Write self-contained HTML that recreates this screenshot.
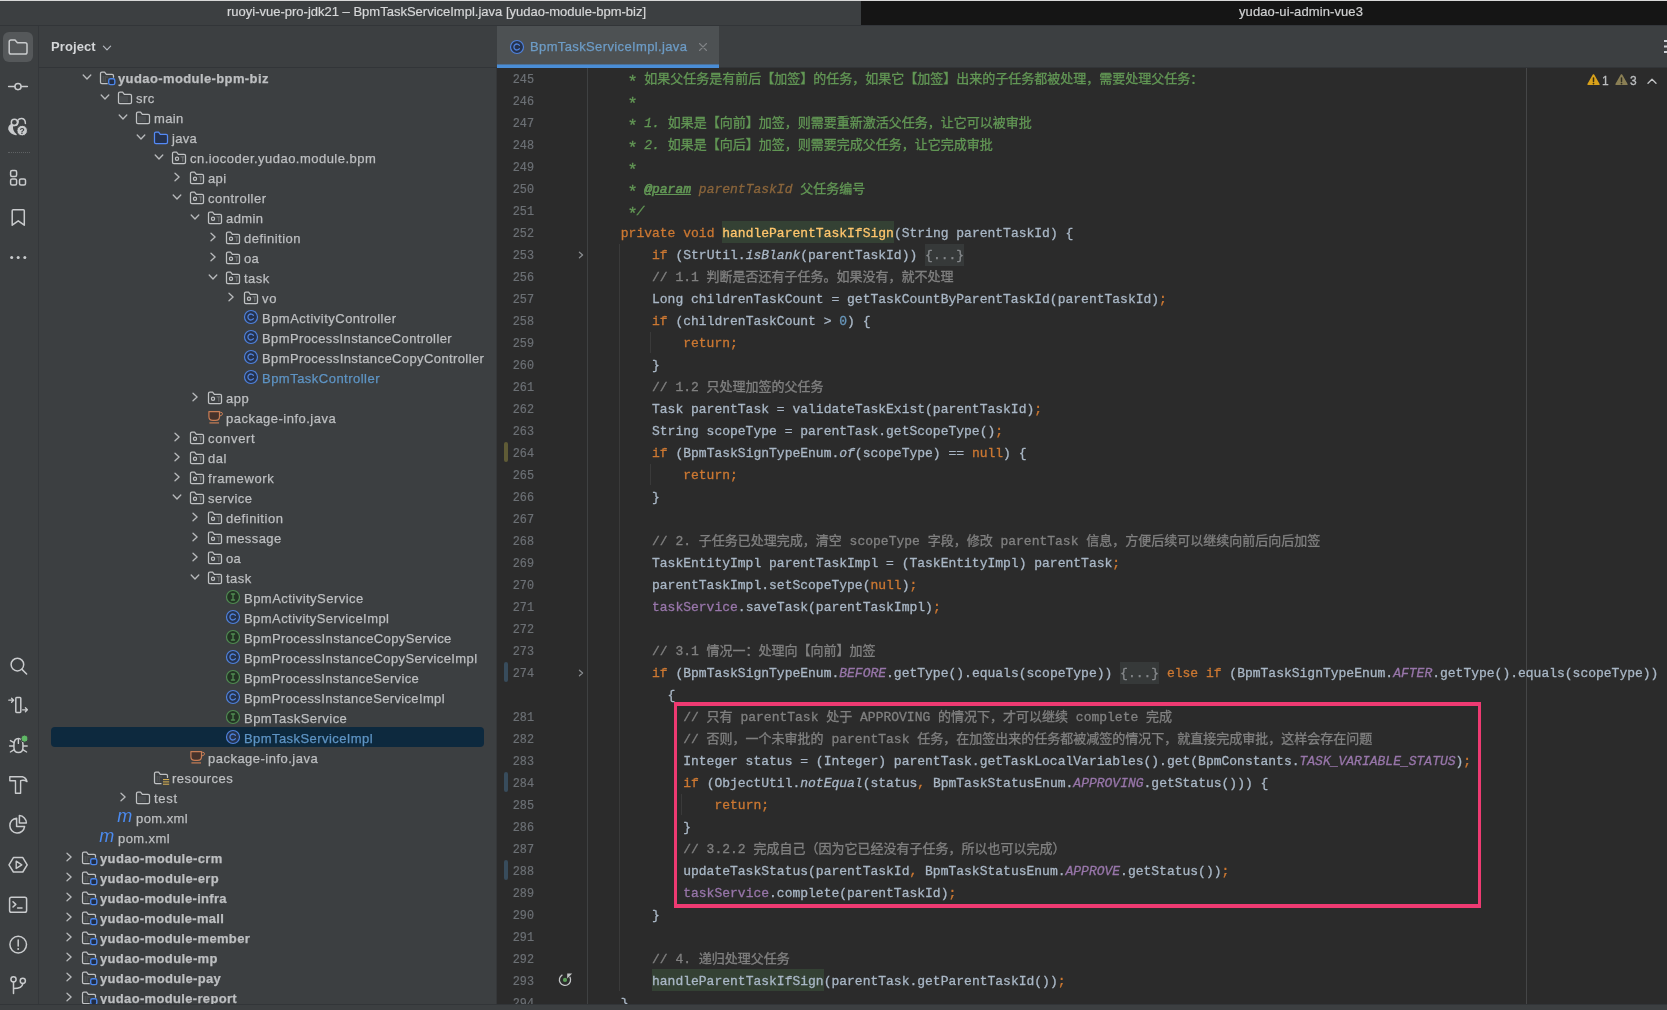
<!DOCTYPE html>
<html lang="zh-CN"><head><meta charset="utf-8"><title>BpmTaskServiceImpl.java</title>
<style>
*{box-sizing:border-box;margin:0;padding:0}
html,body{width:1667px;height:1010px;overflow:hidden;background:#3c3f41}
body{position:relative;font-family:"Liberation Sans","Noto Sans CJK SC",sans-serif;font-size:13px;color:#bdbfc1}
svg{display:block;overflow:visible}
#title1{position:absolute;left:0;top:0;width:861px;height:26px;background:#3c3f41;border-top:1px solid #d8d8d8;border-bottom:1px solid #323538;color:#d6d7d8;line-height:22px;font-size:13px;letter-spacing:0}
#title1 span{will-change:transform;-webkit-text-stroke:.2px;position:absolute;left:227px;top:0;white-space:nowrap}
#title2{position:absolute;left:861px;top:0;width:806px;height:26px;border-bottom:1px solid #33363a;background:#151515;border-top:1px solid #d8d8d8;color:#cfd0d1;line-height:22px;font-size:13px;letter-spacing:.1px}
#title2 span{will-change:transform;-webkit-text-stroke:.2px;letter-spacing:.1px;position:absolute;left:378px;top:0;white-space:nowrap}
#strip{position:absolute;left:0;top:26px;width:39px;height:978px;background:#3c3f41;border-right:1px solid #34373a}
.sbtn{position:absolute;width:30px;height:30px;border-radius:6px;background:#55585a}
.sico{position:absolute}
#sepdots{position:absolute;left:8px;top:152px;width:22px;height:0;border-top:1px dotted #5f6264}
#proj{position:absolute;left:39px;top:26px;width:458px;height:978px;background:#3c3f41;overflow:hidden}
#phead{position:absolute;left:0;top:0;width:458px;height:42px;border-bottom:1px solid #323538}
#ptitle{will-change:transform;position:absolute;left:12px;top:13px;font-weight:700;font-size:13px;color:#d4d6d8;letter-spacing:.1px;line-height:16px}
#tree{will-change:transform;position:absolute;left:-39px;top:-26px;width:536px;height:1030px}
.row{position:absolute;left:0;height:20px;width:497px;white-space:nowrap}
.row .arr{position:absolute;top:2.6px}
.row .ico{position:absolute;top:1px}
.row .t{-webkit-text-stroke:.25px;position:absolute;top:.6px;line-height:20px;font-size:13px;letter-spacing:.22px}
.row .t.bold{font-weight:700;letter-spacing:.05px}
.row .t.blue{color:#5e94c4}
.selbg{position:absolute;left:51px;width:433px;height:20px;border-radius:4px;background:#0d293e}
#tabs{position:absolute;left:497px;top:26px;width:1170px;height:42px;background:#3c3f41;border-bottom:1px solid #323538}
#tab{position:absolute;left:0;top:0;width:222px;height:42px;background:#4d5153}
#tab i{position:absolute;left:0;top:38px;width:222px;height:4px;background:linear-gradient(to bottom,rgba(74,141,214,.55) 0,rgba(74,141,214,.55) 1px,#4a8dd6 1px)}
#tab .ico{position:absolute;left:12px;top:13px}
#tab .t{will-change:transform;-webkit-text-stroke:.25px;position:absolute;left:33px;top:12px;line-height:17px;color:#6d9cc6;letter-spacing:.37px}
#tab .x{position:absolute;left:201px;top:16px}
#editor{position:absolute;left:497px;top:68px;width:1170px;height:936px;background:#2b2b2b;overflow:hidden}
#ed{will-change:transform;position:absolute;left:-497px;top:-68px;width:1667px;height:1010px}
.ln{position:absolute;left:484.4px;width:50px;height:22px;line-height:25.6px;text-align:right;font-family:"Liberation Mono",monospace;font-size:12.4px;color:#6c7075;-webkit-text-stroke:.2px;transform:scaleX(.95);transform-origin:100% 50%}
.cl{-webkit-text-stroke:.3px;position:absolute;left:589.6px;height:22px;line-height:22px;white-space:pre;font-family:"Liberation Mono","Noto Sans CJK SC",monospace;font-size:13px;color:#a9b7c6}
.k{color:#cc7832} .c{color:#808080} .d{color:#629755} .f{color:#9876aa} .i{font-style:italic} .n{color:#6897bb}
.m{color:#ffc66d}
.hl{}
.hlb{position:absolute;height:22px;margin-top:-1px;background:#344134}
.fb{position:absolute;height:22px;width:39px;background:#363939}
.dt{color:#629755;font-style:italic;text-decoration:underline;-webkit-text-stroke:.6px}
.as{display:inline-block;width:7.8px;font-size:17px;line-height:1px;position:relative;top:4.2px;left:-1.2px}
.dp{color:#8a653b;font-style:italic}
.fold{color:#85888b}
.mk{position:absolute;left:504px;width:4px;height:20px;border-radius:2px}
.gd{position:absolute;width:1px}
#gsep{position:absolute;left:587px;top:68px;width:1px;height:942px;background:#3f4142}
#margin{position:absolute;left:1526px;top:68px;width:1px;height:942px;background:#454647}
#pink{position:absolute;left:674px;top:702px;width:807px;height:206px;border:solid #ee3a72;border-width:4px 3px}
#bottom{position:absolute;left:0;top:1004px;width:1667px;height:6px;background:#3c3f41;border-top:1px solid #323538}
#insp{position:absolute;left:1580px;top:70px;height:20px;font-size:12px;color:#bdbfc1}
#insp span{position:absolute;top:4.3px;line-height:14px;-webkit-text-stroke:.3px}
</style></head><body>
<div id="title1"><span>ruoyi-vue-pro-jdk21 – BpmTaskServiceImpl.java [yudao-module-bpm-biz]</span></div>
<div id="title2"><span>yudao-ui-admin-vue3</span></div>
<div id="strip">
<div style="position:absolute;left:0;top:-26px;width:39px;height:1010px;will-change:transform">
<div class="sbtn" style="left:3px;top:32px"></div>
<svg width="39" height="1010" viewBox="0 0 39 1010" style="position:absolute;left:0;top:0" fill="none" stroke="#c9cbcd" stroke-width="1.5" stroke-linecap="round" stroke-linejoin="round"><path d="M9.2 41.8 Q9.2 40 11 40 H15 L17.4 42.8 H25.2 Q27 42.8 27 44.6 V52.2 Q27 54 25.2 54 H11 Q9.2 54 9.2 52.2 Z"/><circle cx="18" cy="86.6" r="3.1"/><path d="M8.6 86.6 H14.6 M21.4 86.6 H27.4"/><circle cx="14.4" cy="122.4" r="3.1"/><path d="M17.6 120.6 Q19.4 118.2 22 118.6 Q25.4 119.2 25.4 123.4"/><path d="M11.4 124.6 Q8.6 126.2 9 129.4 Q11 133.6 16 134.6 Q11.4 131.2 12.4 125.6 Z" fill="#c9cbcd"/><path d="M13 125.6 Q17.6 125.8 18.2 121.6" /><circle cx="22.2" cy="130.6" r="5.3" fill="#c9cbcd" stroke="#3c3f41" stroke-width="1"/><text x="22.2" y="133.6" text-anchor="middle" font-family="Liberation Sans, sans-serif" font-weight="700" font-size="8.5" fill="#3c3f41" stroke="none">?</text><rect x="10.6" y="170.4" width="6" height="6" rx="1.5"/><rect x="10.6" y="179" width="6" height="6" rx="1.5"/><rect x="19.5" y="179" width="6" height="6" rx="1.5"/><path d="M12.2 210.8 Q12.2 209.8 13.2 209.8 H23.3 Q24.3 209.8 24.3 210.8 V225.2 L18.25 220.8 L12.2 225.2 Z"/><circle cx="11.7" cy="257.5" r="1.5" fill="#c9cbcd" stroke="none"/><circle cx="18.2" cy="257.5" r="1.5" fill="#c9cbcd" stroke="none"/><circle cx="24.8" cy="257.5" r="1.5" fill="#c9cbcd" stroke="none"/><circle cx="17.4" cy="664.6" r="6.3"/><path d="M22 669.4 L26.6 674"/><rect x="15.8" y="697.6" width="5" height="14.8" rx=".8"/><path d="M8.8 700.2 H13.4 M11.6 698.2 L13.6 700.2 L11.6 702.2 M22.6 709.8 H27.2 M25.4 707.8 L27.4 709.8 L25.4 711.8" stroke-width="1.3"/><path d="M13.9 745 Q13.9 738.6 18.4 738.6 Q23 738.6 23 745 V747 Q23 752.6 18.4 752.6 Q13.9 752.6 13.9 747 Z"/><path d="M13.6 746 H9.6 M23.2 746 H27.2 M14 742.6 L10.4 740.6 M14.2 749.6 L10.4 752 M22.8 749.6 L26.6 752 M18.4 738.8 V743.4" stroke-width="1.4"/><circle cx="24.6" cy="738.6" r="3.6" fill="#5fb865" stroke="#3c3f41" stroke-width="1"/><path d="M9.8 776.8 H22.4 Q26 777.6 27 781.6 Q24.4 779.6 20.6 780.6 V793.2 H15.5 V780.8 H9.8 Z" stroke-width="1.4"/><path d="M16.6 818.2 A7.4 7.4 0 1 0 24.6 826.6 H16.6 Z"/><path d="M19.4 815.6 A7.4 7.4 0 0 1 26.4 823 H19.4 Z"/><path d="M13.4 857.6 H22.8 L27.2 864.8 L22.8 872 H13.4 L9 864.8 Z"/><path d="M16.2 861.2 L21.8 864.8 L16.2 868.4 Z" stroke-width="1.4"/><rect x="9.6" y="897.2" width="17" height="15" rx="1.8"/><path d="M13 901.8 L15.8 904.4 L13 907 M17.6 908 H22"/><circle cx="18.2" cy="944.6" r="8.3"/><path d="M18.2 940 V946"/><circle cx="18.2" cy="949" r="1" fill="#c9cbcd" stroke="none"/><circle cx="13.5" cy="979.3" r="2.6"/><circle cx="22.8" cy="980.8" r="2.6"/><path d="M13.5 982 V993.6 M13.5 988.6 Q22.2 988.6 22.8 983.6"/></svg>
<div id="sepdots"></div>
</div>
</div>
<div id="proj">
<div id="phead"><div id="ptitle">Project</div>
<div style="position:absolute;left:63.2px;top:17px"><svg width="10" height="10" viewBox="0 0 10 10" ><path d="M1.4 3.2 L5 6.8 L8.6 3.2" fill="none" stroke="#b4b8bf" stroke-width="1.2" stroke-linecap="round" stroke-linejoin="round"/></svg></div>
</div>
<div id="tree">
<div class="row" style="top:68px"><span class="arr" style="left:80.5px"><svg width="12" height="12" viewBox="0 0 12 12" ><path d="M2.2 4 L6 8 L9.8 4" fill="none" stroke="#b9bbbd" stroke-width="1.3" stroke-linecap="round" stroke-linejoin="round"/></svg></span><span class="ico" style="left:99px;top:2px"><svg width="16" height="16" viewBox="0 0 16 16" ><path d="M8.2 13.7 H2.9 Q1.5 13.7 1.5 12.3 V3.6 Q1.5 2.2 2.9 2.2 H5.6 L7.3 4.4 H13.1 Q14.5 4.4 14.5 5.8 V7.2" fill="none" stroke="#c0c2c4" stroke-width="1.25" stroke-linejoin="round" stroke-linecap="round"/><path d="M4.2 6 V12 M6.2 6 V12 M8 6 V8" stroke="#6d7073" stroke-width="1" opacity=".5"/><rect x="9.7" y="8.7" width="6.1" height="5.9" rx="1.7" fill="#222d45" stroke="#4b86ea" stroke-width="1.4"/></svg></span><span class="t bold" style="left:118px;letter-spacing:0.390px">yudao-module-bpm-biz</span></div>
<div class="row" style="top:88px"><span class="arr" style="left:98.5px"><svg width="12" height="12" viewBox="0 0 12 12" ><path d="M2.2 4 L6 8 L9.8 4" fill="none" stroke="#b9bbbd" stroke-width="1.3" stroke-linecap="round" stroke-linejoin="round"/></svg></span><span class="ico" style="left:117px;top:2px"><svg width="16" height="16" viewBox="0 0 16 16" ><path d="M1.5 3.6 Q1.5 2.2 2.9 2.2 H5.6 L7.3 4.4 H13.1 Q14.5 4.4 14.5 5.8 V12.3 Q14.5 13.7 13.1 13.7 H2.9 Q1.5 13.7 1.5 12.3 Z" fill="none" stroke="#c0c2c4" stroke-width="1.25" stroke-linejoin="round"/><path d="M4 6.2 V12.2 M6 6.2 V12.2 M8 6.2 V12.2 M10 6.2 V12.2" stroke="#6d7073" stroke-width="1" opacity=".55"/></svg></span><span class="t" style="left:136px;letter-spacing:0.519px">src</span></div>
<div class="row" style="top:108px"><span class="arr" style="left:116.5px"><svg width="12" height="12" viewBox="0 0 12 12" ><path d="M2.2 4 L6 8 L9.8 4" fill="none" stroke="#b9bbbd" stroke-width="1.3" stroke-linecap="round" stroke-linejoin="round"/></svg></span><span class="ico" style="left:135px;top:2px"><svg width="16" height="16" viewBox="0 0 16 16" ><path d="M1.5 3.6 Q1.5 2.2 2.9 2.2 H5.6 L7.3 4.4 H13.1 Q14.5 4.4 14.5 5.8 V12.3 Q14.5 13.7 13.1 13.7 H2.9 Q1.5 13.7 1.5 12.3 Z" fill="none" stroke="#c0c2c4" stroke-width="1.25" stroke-linejoin="round"/><path d="M4 6.2 V12.2 M6 6.2 V12.2 M8 6.2 V12.2 M10 6.2 V12.2" stroke="#6d7073" stroke-width="1" opacity=".55"/></svg></span><span class="t" style="left:154px;letter-spacing:0.328px">main</span></div>
<div class="row" style="top:128px"><span class="arr" style="left:134.5px"><svg width="12" height="12" viewBox="0 0 12 12" ><path d="M2.2 4 L6 8 L9.8 4" fill="none" stroke="#b9bbbd" stroke-width="1.3" stroke-linecap="round" stroke-linejoin="round"/></svg></span><span class="ico" style="left:153px;top:2px"><svg width="16" height="16" viewBox="0 0 16 16" ><path d="M1.5 3.6 Q1.5 2.2 2.9 2.2 H5.6 L7.3 4.4 H13.1 Q14.5 4.4 14.5 5.8 V12.3 Q14.5 13.7 13.1 13.7 H2.9 Q1.5 13.7 1.5 12.3 Z" fill="#25324d" stroke="#548af7" stroke-width="1.25" stroke-linejoin="round"/></svg></span><span class="t" style="left:172px;letter-spacing:0.285px">java</span></div>
<div class="row" style="top:148px"><span class="arr" style="left:152.5px"><svg width="12" height="12" viewBox="0 0 12 12" ><path d="M2.2 4 L6 8 L9.8 4" fill="none" stroke="#b9bbbd" stroke-width="1.3" stroke-linecap="round" stroke-linejoin="round"/></svg></span><span class="ico" style="left:171px;top:2px"><svg width="16" height="16" viewBox="0 0 16 16" ><path d="M1.5 3.6 Q1.5 2.2 2.9 2.2 H5.6 L7.3 4.4 H13.1 Q14.5 4.4 14.5 5.8 V12.3 Q14.5 13.7 13.1 13.7 H2.9 Q1.5 13.7 1.5 12.3 Z" fill="none" stroke="#c0c2c4" stroke-width="1.25" stroke-linejoin="round"/><circle cx="6" cy="8.8" r="1.6" fill="none" stroke="#c0c2c4" stroke-width="1.2"/><path d="M9.6 6.9 H13.4 M11.8 6.9 V11.6" stroke="#75787b" stroke-width="1" fill="none"/></svg></span><span class="t" style="left:190px;letter-spacing:0.472px">cn.iocoder.yudao.module.bpm</span></div>
<div class="row" style="top:168px"><span class="arr" style="left:170.5px"><svg width="12" height="12" viewBox="0 0 12 12" ><path d="M4 2.3 L8.1 6 L4 9.7" fill="none" stroke="#b9bbbd" stroke-width="1.3" stroke-linecap="round" stroke-linejoin="round"/></svg></span><span class="ico" style="left:189px;top:2px"><svg width="16" height="16" viewBox="0 0 16 16" ><path d="M1.5 3.6 Q1.5 2.2 2.9 2.2 H5.6 L7.3 4.4 H13.1 Q14.5 4.4 14.5 5.8 V12.3 Q14.5 13.7 13.1 13.7 H2.9 Q1.5 13.7 1.5 12.3 Z" fill="none" stroke="#c0c2c4" stroke-width="1.25" stroke-linejoin="round"/><circle cx="6" cy="8.8" r="1.6" fill="none" stroke="#c0c2c4" stroke-width="1.2"/><path d="M9.6 6.9 H13.4 M11.8 6.9 V11.6" stroke="#75787b" stroke-width="1" fill="none"/></svg></span><span class="t" style="left:208px;letter-spacing:0.347px">api</span></div>
<div class="row" style="top:188px"><span class="arr" style="left:170.5px"><svg width="12" height="12" viewBox="0 0 12 12" ><path d="M2.2 4 L6 8 L9.8 4" fill="none" stroke="#b9bbbd" stroke-width="1.3" stroke-linecap="round" stroke-linejoin="round"/></svg></span><span class="ico" style="left:189px;top:2px"><svg width="16" height="16" viewBox="0 0 16 16" ><path d="M1.5 3.6 Q1.5 2.2 2.9 2.2 H5.6 L7.3 4.4 H13.1 Q14.5 4.4 14.5 5.8 V12.3 Q14.5 13.7 13.1 13.7 H2.9 Q1.5 13.7 1.5 12.3 Z" fill="none" stroke="#c0c2c4" stroke-width="1.25" stroke-linejoin="round"/><circle cx="6" cy="8.8" r="1.6" fill="none" stroke="#c0c2c4" stroke-width="1.2"/><path d="M9.6 6.9 H13.4 M11.8 6.9 V11.6" stroke="#75787b" stroke-width="1" fill="none"/></svg></span><span class="t" style="left:208px;letter-spacing:0.503px">controller</span></div>
<div class="row" style="top:208px"><span class="arr" style="left:188.5px"><svg width="12" height="12" viewBox="0 0 12 12" ><path d="M2.2 4 L6 8 L9.8 4" fill="none" stroke="#b9bbbd" stroke-width="1.3" stroke-linecap="round" stroke-linejoin="round"/></svg></span><span class="ico" style="left:207px;top:2px"><svg width="16" height="16" viewBox="0 0 16 16" ><path d="M1.5 3.6 Q1.5 2.2 2.9 2.2 H5.6 L7.3 4.4 H13.1 Q14.5 4.4 14.5 5.8 V12.3 Q14.5 13.7 13.1 13.7 H2.9 Q1.5 13.7 1.5 12.3 Z" fill="none" stroke="#c0c2c4" stroke-width="1.25" stroke-linejoin="round"/><circle cx="6" cy="8.8" r="1.6" fill="none" stroke="#c0c2c4" stroke-width="1.2"/><path d="M9.6 6.9 H13.4 M11.8 6.9 V11.6" stroke="#75787b" stroke-width="1" fill="none"/></svg></span><span class="t" style="left:226px;letter-spacing:0.396px">admin</span></div>
<div class="row" style="top:228px"><span class="arr" style="left:206.5px"><svg width="12" height="12" viewBox="0 0 12 12" ><path d="M4 2.3 L8.1 6 L4 9.7" fill="none" stroke="#b9bbbd" stroke-width="1.3" stroke-linecap="round" stroke-linejoin="round"/></svg></span><span class="ico" style="left:225px;top:2px"><svg width="16" height="16" viewBox="0 0 16 16" ><path d="M1.5 3.6 Q1.5 2.2 2.9 2.2 H5.6 L7.3 4.4 H13.1 Q14.5 4.4 14.5 5.8 V12.3 Q14.5 13.7 13.1 13.7 H2.9 Q1.5 13.7 1.5 12.3 Z" fill="none" stroke="#c0c2c4" stroke-width="1.25" stroke-linejoin="round"/><circle cx="6" cy="8.8" r="1.6" fill="none" stroke="#c0c2c4" stroke-width="1.2"/><path d="M9.6 6.9 H13.4 M11.8 6.9 V11.6" stroke="#75787b" stroke-width="1" fill="none"/></svg></span><span class="t" style="left:244px;letter-spacing:0.505px">definition</span></div>
<div class="row" style="top:248px"><span class="arr" style="left:206.5px"><svg width="12" height="12" viewBox="0 0 12 12" ><path d="M4 2.3 L8.1 6 L4 9.7" fill="none" stroke="#b9bbbd" stroke-width="1.3" stroke-linecap="round" stroke-linejoin="round"/></svg></span><span class="ico" style="left:225px;top:2px"><svg width="16" height="16" viewBox="0 0 16 16" ><path d="M1.5 3.6 Q1.5 2.2 2.9 2.2 H5.6 L7.3 4.4 H13.1 Q14.5 4.4 14.5 5.8 V12.3 Q14.5 13.7 13.1 13.7 H2.9 Q1.5 13.7 1.5 12.3 Z" fill="none" stroke="#c0c2c4" stroke-width="1.25" stroke-linejoin="round"/><circle cx="6" cy="8.8" r="1.6" fill="none" stroke="#c0c2c4" stroke-width="1.2"/><path d="M9.6 6.9 H13.4 M11.8 6.9 V11.6" stroke="#75787b" stroke-width="1" fill="none"/></svg></span><span class="t" style="left:244px;letter-spacing:0.266px">oa</span></div>
<div class="row" style="top:268px"><span class="arr" style="left:206.5px"><svg width="12" height="12" viewBox="0 0 12 12" ><path d="M2.2 4 L6 8 L9.8 4" fill="none" stroke="#b9bbbd" stroke-width="1.3" stroke-linecap="round" stroke-linejoin="round"/></svg></span><span class="ico" style="left:225px;top:2px"><svg width="16" height="16" viewBox="0 0 16 16" ><path d="M1.5 3.6 Q1.5 2.2 2.9 2.2 H5.6 L7.3 4.4 H13.1 Q14.5 4.4 14.5 5.8 V12.3 Q14.5 13.7 13.1 13.7 H2.9 Q1.5 13.7 1.5 12.3 Z" fill="none" stroke="#c0c2c4" stroke-width="1.25" stroke-linejoin="round"/><circle cx="6" cy="8.8" r="1.6" fill="none" stroke="#c0c2c4" stroke-width="1.2"/><path d="M9.6 6.9 H13.4 M11.8 6.9 V11.6" stroke="#75787b" stroke-width="1" fill="none"/></svg></span><span class="t" style="left:244px;letter-spacing:0.489px">task</span></div>
<div class="row" style="top:288px"><span class="arr" style="left:224.5px"><svg width="12" height="12" viewBox="0 0 12 12" ><path d="M4 2.3 L8.1 6 L4 9.7" fill="none" stroke="#b9bbbd" stroke-width="1.3" stroke-linecap="round" stroke-linejoin="round"/></svg></span><span class="ico" style="left:243px;top:2px"><svg width="16" height="16" viewBox="0 0 16 16" ><path d="M1.5 3.6 Q1.5 2.2 2.9 2.2 H5.6 L7.3 4.4 H13.1 Q14.5 4.4 14.5 5.8 V12.3 Q14.5 13.7 13.1 13.7 H2.9 Q1.5 13.7 1.5 12.3 Z" fill="none" stroke="#c0c2c4" stroke-width="1.25" stroke-linejoin="round"/><circle cx="6" cy="8.8" r="1.6" fill="none" stroke="#c0c2c4" stroke-width="1.2"/><path d="M9.6 6.9 H13.4 M11.8 6.9 V11.6" stroke="#75787b" stroke-width="1" fill="none"/></svg></span><span class="t" style="left:262px;letter-spacing:0.683px">vo</span></div>
<div class="row" style="top:308px"><span class="ico" style="left:243px;top:1px"><svg width="16" height="16" viewBox="0 0 16 16" ><circle cx="8" cy="8" r="6.5" fill="#25324d" stroke="#4f82dc" stroke-width="1.2"/><path d="M10.4 6.3 A3 3 0 1 0 10.4 9.7" fill="none" stroke="#4f82dc" stroke-width="1.3" stroke-linecap="round"/></svg></span><span class="t" style="left:262px;letter-spacing:0.487px">BpmActivityController</span></div>
<div class="row" style="top:328px"><span class="ico" style="left:243px;top:1px"><svg width="16" height="16" viewBox="0 0 16 16" ><circle cx="8" cy="8" r="6.5" fill="#25324d" stroke="#4f82dc" stroke-width="1.2"/><path d="M10.4 6.3 A3 3 0 1 0 10.4 9.7" fill="none" stroke="#4f82dc" stroke-width="1.3" stroke-linecap="round"/></svg></span><span class="t" style="left:262px;letter-spacing:0.386px">BpmProcessInstanceController</span></div>
<div class="row" style="top:348px"><span class="ico" style="left:243px;top:1px"><svg width="16" height="16" viewBox="0 0 16 16" ><circle cx="8" cy="8" r="6.5" fill="#25324d" stroke="#4f82dc" stroke-width="1.2"/><path d="M10.4 6.3 A3 3 0 1 0 10.4 9.7" fill="none" stroke="#4f82dc" stroke-width="1.3" stroke-linecap="round"/></svg></span><span class="t" style="left:262px;letter-spacing:0.399px">BpmProcessInstanceCopyController</span></div>
<div class="row" style="top:368px"><span class="ico" style="left:243px;top:1px"><svg width="16" height="16" viewBox="0 0 16 16" ><circle cx="8" cy="8" r="6.5" fill="#25324d" stroke="#4f82dc" stroke-width="1.2"/><path d="M10.4 6.3 A3 3 0 1 0 10.4 9.7" fill="none" stroke="#4f82dc" stroke-width="1.3" stroke-linecap="round"/></svg></span><span class="t blue" style="left:262px;letter-spacing:0.481px">BpmTaskController</span></div>
<div class="row" style="top:388px"><span class="arr" style="left:188.5px"><svg width="12" height="12" viewBox="0 0 12 12" ><path d="M4 2.3 L8.1 6 L4 9.7" fill="none" stroke="#b9bbbd" stroke-width="1.3" stroke-linecap="round" stroke-linejoin="round"/></svg></span><span class="ico" style="left:207px;top:2px"><svg width="16" height="16" viewBox="0 0 16 16" ><path d="M1.5 3.6 Q1.5 2.2 2.9 2.2 H5.6 L7.3 4.4 H13.1 Q14.5 4.4 14.5 5.8 V12.3 Q14.5 13.7 13.1 13.7 H2.9 Q1.5 13.7 1.5 12.3 Z" fill="none" stroke="#c0c2c4" stroke-width="1.25" stroke-linejoin="round"/><circle cx="6" cy="8.8" r="1.6" fill="none" stroke="#c0c2c4" stroke-width="1.2"/><path d="M9.6 6.9 H13.4 M11.8 6.9 V11.6" stroke="#75787b" stroke-width="1" fill="none"/></svg></span><span class="t" style="left:226px;letter-spacing:0.466px">app</span></div>
<div class="row" style="top:408px"><span class="ico" style="left:207px;top:1px"><svg width="16" height="16" viewBox="0 0 16 16" ><path d="M1.9 2.6 H12.5 V7.4 Q12.5 11.3 8.6 11.3 H5.8 Q1.9 11.3 1.9 7.4 Z" fill="#45322b" stroke="#c77d55" stroke-width="1.2" stroke-linejoin="round"/><path d="M12.5 3.3 H13.8 Q15.5 3.3 15.5 4.9 Q15.5 6.6 12.5 7" fill="none" stroke="#c77d55" stroke-width="1"/><path d="M2.4 13.9 H12" stroke="#c77d55" stroke-width="1.2"/></svg></span><span class="t" style="left:226px;letter-spacing:0.482px">package-info.java</span></div>
<div class="row" style="top:428px"><span class="arr" style="left:170.5px"><svg width="12" height="12" viewBox="0 0 12 12" ><path d="M4 2.3 L8.1 6 L4 9.7" fill="none" stroke="#b9bbbd" stroke-width="1.3" stroke-linecap="round" stroke-linejoin="round"/></svg></span><span class="ico" style="left:189px;top:2px"><svg width="16" height="16" viewBox="0 0 16 16" ><path d="M1.5 3.6 Q1.5 2.2 2.9 2.2 H5.6 L7.3 4.4 H13.1 Q14.5 4.4 14.5 5.8 V12.3 Q14.5 13.7 13.1 13.7 H2.9 Q1.5 13.7 1.5 12.3 Z" fill="none" stroke="#c0c2c4" stroke-width="1.25" stroke-linejoin="round"/><circle cx="6" cy="8.8" r="1.6" fill="none" stroke="#c0c2c4" stroke-width="1.2"/><path d="M9.6 6.9 H13.4 M11.8 6.9 V11.6" stroke="#75787b" stroke-width="1" fill="none"/></svg></span><span class="t" style="left:208px;letter-spacing:0.680px">convert</span></div>
<div class="row" style="top:448px"><span class="arr" style="left:170.5px"><svg width="12" height="12" viewBox="0 0 12 12" ><path d="M4 2.3 L8.1 6 L4 9.7" fill="none" stroke="#b9bbbd" stroke-width="1.3" stroke-linecap="round" stroke-linejoin="round"/></svg></span><span class="ico" style="left:189px;top:2px"><svg width="16" height="16" viewBox="0 0 16 16" ><path d="M1.5 3.6 Q1.5 2.2 2.9 2.2 H5.6 L7.3 4.4 H13.1 Q14.5 4.4 14.5 5.8 V12.3 Q14.5 13.7 13.1 13.7 H2.9 Q1.5 13.7 1.5 12.3 Z" fill="none" stroke="#c0c2c4" stroke-width="1.25" stroke-linejoin="round"/><circle cx="6" cy="8.8" r="1.6" fill="none" stroke="#c0c2c4" stroke-width="1.2"/><path d="M9.6 6.9 H13.4 M11.8 6.9 V11.6" stroke="#75787b" stroke-width="1" fill="none"/></svg></span><span class="t" style="left:208px;letter-spacing:0.480px">dal</span></div>
<div class="row" style="top:468px"><span class="arr" style="left:170.5px"><svg width="12" height="12" viewBox="0 0 12 12" ><path d="M4 2.3 L8.1 6 L4 9.7" fill="none" stroke="#b9bbbd" stroke-width="1.3" stroke-linecap="round" stroke-linejoin="round"/></svg></span><span class="ico" style="left:189px;top:2px"><svg width="16" height="16" viewBox="0 0 16 16" ><path d="M1.5 3.6 Q1.5 2.2 2.9 2.2 H5.6 L7.3 4.4 H13.1 Q14.5 4.4 14.5 5.8 V12.3 Q14.5 13.7 13.1 13.7 H2.9 Q1.5 13.7 1.5 12.3 Z" fill="none" stroke="#c0c2c4" stroke-width="1.25" stroke-linejoin="round"/><circle cx="6" cy="8.8" r="1.6" fill="none" stroke="#c0c2c4" stroke-width="1.2"/><path d="M9.6 6.9 H13.4 M11.8 6.9 V11.6" stroke="#75787b" stroke-width="1" fill="none"/></svg></span><span class="t" style="left:208px;letter-spacing:0.635px">framework</span></div>
<div class="row" style="top:488px"><span class="arr" style="left:170.5px"><svg width="12" height="12" viewBox="0 0 12 12" ><path d="M2.2 4 L6 8 L9.8 4" fill="none" stroke="#b9bbbd" stroke-width="1.3" stroke-linecap="round" stroke-linejoin="round"/></svg></span><span class="ico" style="left:189px;top:2px"><svg width="16" height="16" viewBox="0 0 16 16" ><path d="M1.5 3.6 Q1.5 2.2 2.9 2.2 H5.6 L7.3 4.4 H13.1 Q14.5 4.4 14.5 5.8 V12.3 Q14.5 13.7 13.1 13.7 H2.9 Q1.5 13.7 1.5 12.3 Z" fill="none" stroke="#c0c2c4" stroke-width="1.25" stroke-linejoin="round"/><circle cx="6" cy="8.8" r="1.6" fill="none" stroke="#c0c2c4" stroke-width="1.2"/><path d="M9.6 6.9 H13.4 M11.8 6.9 V11.6" stroke="#75787b" stroke-width="1" fill="none"/></svg></span><span class="t" style="left:208px;letter-spacing:0.473px">service</span></div>
<div class="row" style="top:508px"><span class="arr" style="left:188.5px"><svg width="12" height="12" viewBox="0 0 12 12" ><path d="M4 2.3 L8.1 6 L4 9.7" fill="none" stroke="#b9bbbd" stroke-width="1.3" stroke-linecap="round" stroke-linejoin="round"/></svg></span><span class="ico" style="left:207px;top:2px"><svg width="16" height="16" viewBox="0 0 16 16" ><path d="M1.5 3.6 Q1.5 2.2 2.9 2.2 H5.6 L7.3 4.4 H13.1 Q14.5 4.4 14.5 5.8 V12.3 Q14.5 13.7 13.1 13.7 H2.9 Q1.5 13.7 1.5 12.3 Z" fill="none" stroke="#c0c2c4" stroke-width="1.25" stroke-linejoin="round"/><circle cx="6" cy="8.8" r="1.6" fill="none" stroke="#c0c2c4" stroke-width="1.2"/><path d="M9.6 6.9 H13.4 M11.8 6.9 V11.6" stroke="#75787b" stroke-width="1" fill="none"/></svg></span><span class="t" style="left:226px;letter-spacing:0.545px">definition</span></div>
<div class="row" style="top:528px"><span class="arr" style="left:188.5px"><svg width="12" height="12" viewBox="0 0 12 12" ><path d="M4 2.3 L8.1 6 L4 9.7" fill="none" stroke="#b9bbbd" stroke-width="1.3" stroke-linecap="round" stroke-linejoin="round"/></svg></span><span class="ico" style="left:207px;top:2px"><svg width="16" height="16" viewBox="0 0 16 16" ><path d="M1.5 3.6 Q1.5 2.2 2.9 2.2 H5.6 L7.3 4.4 H13.1 Q14.5 4.4 14.5 5.8 V12.3 Q14.5 13.7 13.1 13.7 H2.9 Q1.5 13.7 1.5 12.3 Z" fill="none" stroke="#c0c2c4" stroke-width="1.25" stroke-linejoin="round"/><circle cx="6" cy="8.8" r="1.6" fill="none" stroke="#c0c2c4" stroke-width="1.2"/><path d="M9.6 6.9 H13.4 M11.8 6.9 V11.6" stroke="#75787b" stroke-width="1" fill="none"/></svg></span><span class="t" style="left:226px;letter-spacing:0.393px">message</span></div>
<div class="row" style="top:548px"><span class="arr" style="left:188.5px"><svg width="12" height="12" viewBox="0 0 12 12" ><path d="M4 2.3 L8.1 6 L4 9.7" fill="none" stroke="#b9bbbd" stroke-width="1.3" stroke-linecap="round" stroke-linejoin="round"/></svg></span><span class="ico" style="left:207px;top:2px"><svg width="16" height="16" viewBox="0 0 16 16" ><path d="M1.5 3.6 Q1.5 2.2 2.9 2.2 H5.6 L7.3 4.4 H13.1 Q14.5 4.4 14.5 5.8 V12.3 Q14.5 13.7 13.1 13.7 H2.9 Q1.5 13.7 1.5 12.3 Z" fill="none" stroke="#c0c2c4" stroke-width="1.25" stroke-linejoin="round"/><circle cx="6" cy="8.8" r="1.6" fill="none" stroke="#c0c2c4" stroke-width="1.2"/><path d="M9.6 6.9 H13.4 M11.8 6.9 V11.6" stroke="#75787b" stroke-width="1" fill="none"/></svg></span><span class="t" style="left:226px;letter-spacing:0.266px">oa</span></div>
<div class="row" style="top:568px"><span class="arr" style="left:188.5px"><svg width="12" height="12" viewBox="0 0 12 12" ><path d="M2.2 4 L6 8 L9.8 4" fill="none" stroke="#b9bbbd" stroke-width="1.3" stroke-linecap="round" stroke-linejoin="round"/></svg></span><span class="ico" style="left:207px;top:2px"><svg width="16" height="16" viewBox="0 0 16 16" ><path d="M1.5 3.6 Q1.5 2.2 2.9 2.2 H5.6 L7.3 4.4 H13.1 Q14.5 4.4 14.5 5.8 V12.3 Q14.5 13.7 13.1 13.7 H2.9 Q1.5 13.7 1.5 12.3 Z" fill="none" stroke="#c0c2c4" stroke-width="1.25" stroke-linejoin="round"/><circle cx="6" cy="8.8" r="1.6" fill="none" stroke="#c0c2c4" stroke-width="1.2"/><path d="M9.6 6.9 H13.4 M11.8 6.9 V11.6" stroke="#75787b" stroke-width="1" fill="none"/></svg></span><span class="t" style="left:226px;letter-spacing:0.489px">task</span></div>
<div class="row" style="top:588px"><span class="ico" style="left:225px;top:1px"><svg width="16" height="16" viewBox="0 0 16 16" ><circle cx="8" cy="8" r="6.5" fill="#233424" stroke="#508c52" stroke-width="1.2"/><path d="M6.4 5 H9.6 M8 5 V11 M6.4 11 H9.6" fill="none" stroke="#508c52" stroke-width="1.3" stroke-linecap="round"/></svg></span><span class="t" style="left:244px;letter-spacing:0.469px">BpmActivityService</span></div>
<div class="row" style="top:608px"><span class="ico" style="left:225px;top:1px"><svg width="16" height="16" viewBox="0 0 16 16" ><circle cx="8" cy="8" r="6.5" fill="#25324d" stroke="#4f82dc" stroke-width="1.2"/><path d="M10.4 6.3 A3 3 0 1 0 10.4 9.7" fill="none" stroke="#4f82dc" stroke-width="1.3" stroke-linecap="round"/></svg></span><span class="t" style="left:244px;letter-spacing:0.436px">BpmActivityServiceImpl</span></div>
<div class="row" style="top:628px"><span class="ico" style="left:225px;top:1px"><svg width="16" height="16" viewBox="0 0 16 16" ><circle cx="8" cy="8" r="6.5" fill="#233424" stroke="#508c52" stroke-width="1.2"/><path d="M6.4 5 H9.6 M8 5 V11 M6.4 11 H9.6" fill="none" stroke="#508c52" stroke-width="1.3" stroke-linecap="round"/></svg></span><span class="t" style="left:244px;letter-spacing:0.385px">BpmProcessInstanceCopyService</span></div>
<div class="row" style="top:648px"><span class="ico" style="left:225px;top:1px"><svg width="16" height="16" viewBox="0 0 16 16" ><circle cx="8" cy="8" r="6.5" fill="#25324d" stroke="#4f82dc" stroke-width="1.2"/><path d="M10.4 6.3 A3 3 0 1 0 10.4 9.7" fill="none" stroke="#4f82dc" stroke-width="1.3" stroke-linecap="round"/></svg></span><span class="t" style="left:244px;letter-spacing:0.373px">BpmProcessInstanceCopyServiceImpl</span></div>
<div class="row" style="top:668px"><span class="ico" style="left:225px;top:1px"><svg width="16" height="16" viewBox="0 0 16 16" ><circle cx="8" cy="8" r="6.5" fill="#233424" stroke="#508c52" stroke-width="1.2"/><path d="M6.4 5 H9.6 M8 5 V11 M6.4 11 H9.6" fill="none" stroke="#508c52" stroke-width="1.3" stroke-linecap="round"/></svg></span><span class="t" style="left:244px;letter-spacing:0.360px">BpmProcessInstanceService</span></div>
<div class="row" style="top:688px"><span class="ico" style="left:225px;top:1px"><svg width="16" height="16" viewBox="0 0 16 16" ><circle cx="8" cy="8" r="6.5" fill="#25324d" stroke="#4f82dc" stroke-width="1.2"/><path d="M10.4 6.3 A3 3 0 1 0 10.4 9.7" fill="none" stroke="#4f82dc" stroke-width="1.3" stroke-linecap="round"/></svg></span><span class="t" style="left:244px;letter-spacing:0.350px">BpmProcessInstanceServiceImpl</span></div>
<div class="row" style="top:708px"><span class="ico" style="left:225px;top:1px"><svg width="16" height="16" viewBox="0 0 16 16" ><circle cx="8" cy="8" r="6.5" fill="#233424" stroke="#508c52" stroke-width="1.2"/><path d="M6.4 5 H9.6 M8 5 V11 M6.4 11 H9.6" fill="none" stroke="#508c52" stroke-width="1.3" stroke-linecap="round"/></svg></span><span class="t" style="left:244px;letter-spacing:0.463px">BpmTaskService</span></div>
<div class="selbg" style="top:727px"></div>
<div class="row" style="top:728px"><span class="ico" style="left:225px;top:1px"><svg width="16" height="16" viewBox="0 0 16 16" ><circle cx="8" cy="8" r="6.5" fill="#25324d" stroke="#4f82dc" stroke-width="1.2"/><path d="M10.4 6.3 A3 3 0 1 0 10.4 9.7" fill="none" stroke="#4f82dc" stroke-width="1.3" stroke-linecap="round"/></svg></span><span class="t blue" style="left:244px;letter-spacing:0.429px">BpmTaskServiceImpl</span></div>
<div class="row" style="top:748px"><span class="ico" style="left:189px;top:1px"><svg width="16" height="16" viewBox="0 0 16 16" ><path d="M1.9 2.6 H12.5 V7.4 Q12.5 11.3 8.6 11.3 H5.8 Q1.9 11.3 1.9 7.4 Z" fill="#45322b" stroke="#c77d55" stroke-width="1.2" stroke-linejoin="round"/><path d="M12.5 3.3 H13.8 Q15.5 3.3 15.5 4.9 Q15.5 6.6 12.5 7" fill="none" stroke="#c77d55" stroke-width="1"/><path d="M2.4 13.9 H12" stroke="#c77d55" stroke-width="1.2"/></svg></span><span class="t" style="left:208px;letter-spacing:0.482px">package-info.java</span></div>
<div class="row" style="top:768px"><span class="ico" style="left:153px;top:2px"><svg width="16" height="16" viewBox="0 0 16 16" ><path d="M8 13.7 H2.9 Q1.5 13.7 1.5 12.3 V3.6 Q1.5 2.2 2.9 2.2 H5.6 L7.3 4.4 H13.1 Q14.5 4.4 14.5 5.8 V7.4" fill="none" stroke="#c0c2c4" stroke-width="1.25" stroke-linejoin="round" stroke-linecap="round"/><path d="M4.2 6 V12 M6.2 6 V12 M8 6 V8" stroke="#6d7073" stroke-width="1" opacity=".5"/><path d="M10 9.6 H16.2 M10 11.9 H16.2 M10 14.2 H16.2" stroke="#e8bd55" stroke-width=".95"/></svg></span><span class="t" style="left:172px;letter-spacing:0.447px">resources</span></div>
<div class="row" style="top:788px"><span class="arr" style="left:116.5px"><svg width="12" height="12" viewBox="0 0 12 12" ><path d="M4 2.3 L8.1 6 L4 9.7" fill="none" stroke="#b9bbbd" stroke-width="1.3" stroke-linecap="round" stroke-linejoin="round"/></svg></span><span class="ico" style="left:135px;top:2px"><svg width="16" height="16" viewBox="0 0 16 16" ><path d="M1.5 3.6 Q1.5 2.2 2.9 2.2 H5.6 L7.3 4.4 H13.1 Q14.5 4.4 14.5 5.8 V12.3 Q14.5 13.7 13.1 13.7 H2.9 Q1.5 13.7 1.5 12.3 Z" fill="none" stroke="#c0c2c4" stroke-width="1.25" stroke-linejoin="round"/><path d="M4 6.2 V12.2 M6 6.2 V12.2 M8 6.2 V12.2 M10 6.2 V12.2" stroke="#6d7073" stroke-width="1" opacity=".55"/></svg></span><span class="t" style="left:154px;letter-spacing:0.683px">test</span></div>
<div class="row" style="top:808px"><span class="ico" style="left:117px;top:1px"><svg width="16" height="16" viewBox="0 0 16 16"><text x="0.2" y="12.6" font-family="Liberation Sans, sans-serif" font-style="italic" font-size="18.6" fill="#4b8bf0" textLength="15" lengthAdjust="spacingAndGlyphs">m</text></svg></span><span class="t" style="left:136px;letter-spacing:0.439px">pom.xml</span></div>
<div class="row" style="top:828px"><span class="ico" style="left:99px;top:1px"><svg width="16" height="16" viewBox="0 0 16 16"><text x="0.2" y="12.6" font-family="Liberation Sans, sans-serif" font-style="italic" font-size="18.6" fill="#4b8bf0" textLength="15" lengthAdjust="spacingAndGlyphs">m</text></svg></span><span class="t" style="left:118px;letter-spacing:0.411px">pom.xml</span></div>
<div class="row" style="top:848px"><span class="arr" style="left:62.5px"><svg width="12" height="12" viewBox="0 0 12 12" ><path d="M4 2.3 L8.1 6 L4 9.7" fill="none" stroke="#b9bbbd" stroke-width="1.3" stroke-linecap="round" stroke-linejoin="round"/></svg></span><span class="ico" style="left:81px;top:2px"><svg width="16" height="16" viewBox="0 0 16 16" ><path d="M8.2 13.7 H2.9 Q1.5 13.7 1.5 12.3 V3.6 Q1.5 2.2 2.9 2.2 H5.6 L7.3 4.4 H13.1 Q14.5 4.4 14.5 5.8 V7.2" fill="none" stroke="#c0c2c4" stroke-width="1.25" stroke-linejoin="round" stroke-linecap="round"/><path d="M4.2 6 V12 M6.2 6 V12 M8 6 V8" stroke="#6d7073" stroke-width="1" opacity=".5"/><rect x="9.7" y="8.7" width="6.1" height="5.9" rx="1.7" fill="#222d45" stroke="#4b86ea" stroke-width="1.4"/></svg></span><span class="t bold" style="left:100px;letter-spacing:0.355px">yudao-module-crm</span></div>
<div class="row" style="top:868px"><span class="arr" style="left:62.5px"><svg width="12" height="12" viewBox="0 0 12 12" ><path d="M4 2.3 L8.1 6 L4 9.7" fill="none" stroke="#b9bbbd" stroke-width="1.3" stroke-linecap="round" stroke-linejoin="round"/></svg></span><span class="ico" style="left:81px;top:2px"><svg width="16" height="16" viewBox="0 0 16 16" ><path d="M8.2 13.7 H2.9 Q1.5 13.7 1.5 12.3 V3.6 Q1.5 2.2 2.9 2.2 H5.6 L7.3 4.4 H13.1 Q14.5 4.4 14.5 5.8 V7.2" fill="none" stroke="#c0c2c4" stroke-width="1.25" stroke-linejoin="round" stroke-linecap="round"/><path d="M4.2 6 V12 M6.2 6 V12 M8 6 V8" stroke="#6d7073" stroke-width="1" opacity=".5"/><rect x="9.7" y="8.7" width="6.1" height="5.9" rx="1.7" fill="#222d45" stroke="#4b86ea" stroke-width="1.4"/></svg></span><span class="t bold" style="left:100px;letter-spacing:0.350px">yudao-module-erp</span></div>
<div class="row" style="top:888px"><span class="arr" style="left:62.5px"><svg width="12" height="12" viewBox="0 0 12 12" ><path d="M4 2.3 L8.1 6 L4 9.7" fill="none" stroke="#b9bbbd" stroke-width="1.3" stroke-linecap="round" stroke-linejoin="round"/></svg></span><span class="ico" style="left:81px;top:2px"><svg width="16" height="16" viewBox="0 0 16 16" ><path d="M8.2 13.7 H2.9 Q1.5 13.7 1.5 12.3 V3.6 Q1.5 2.2 2.9 2.2 H5.6 L7.3 4.4 H13.1 Q14.5 4.4 14.5 5.8 V7.2" fill="none" stroke="#c0c2c4" stroke-width="1.25" stroke-linejoin="round" stroke-linecap="round"/><path d="M4.2 6 V12 M6.2 6 V12 M8 6 V8" stroke="#6d7073" stroke-width="1" opacity=".5"/><rect x="9.7" y="8.7" width="6.1" height="5.9" rx="1.7" fill="#222d45" stroke="#4b86ea" stroke-width="1.4"/></svg></span><span class="t bold" style="left:100px;letter-spacing:0.309px">yudao-module-infra</span></div>
<div class="row" style="top:908px"><span class="arr" style="left:62.5px"><svg width="12" height="12" viewBox="0 0 12 12" ><path d="M4 2.3 L8.1 6 L4 9.7" fill="none" stroke="#b9bbbd" stroke-width="1.3" stroke-linecap="round" stroke-linejoin="round"/></svg></span><span class="ico" style="left:81px;top:2px"><svg width="16" height="16" viewBox="0 0 16 16" ><path d="M8.2 13.7 H2.9 Q1.5 13.7 1.5 12.3 V3.6 Q1.5 2.2 2.9 2.2 H5.6 L7.3 4.4 H13.1 Q14.5 4.4 14.5 5.8 V7.2" fill="none" stroke="#c0c2c4" stroke-width="1.25" stroke-linejoin="round" stroke-linecap="round"/><path d="M4.2 6 V12 M6.2 6 V12 M8 6 V8" stroke="#6d7073" stroke-width="1" opacity=".5"/><rect x="9.7" y="8.7" width="6.1" height="5.9" rx="1.7" fill="#222d45" stroke="#4b86ea" stroke-width="1.4"/></svg></span><span class="t bold" style="left:100px;letter-spacing:0.289px">yudao-module-mall</span></div>
<div class="row" style="top:928px"><span class="arr" style="left:62.5px"><svg width="12" height="12" viewBox="0 0 12 12" ><path d="M4 2.3 L8.1 6 L4 9.7" fill="none" stroke="#b9bbbd" stroke-width="1.3" stroke-linecap="round" stroke-linejoin="round"/></svg></span><span class="ico" style="left:81px;top:2px"><svg width="16" height="16" viewBox="0 0 16 16" ><path d="M8.2 13.7 H2.9 Q1.5 13.7 1.5 12.3 V3.6 Q1.5 2.2 2.9 2.2 H5.6 L7.3 4.4 H13.1 Q14.5 4.4 14.5 5.8 V7.2" fill="none" stroke="#c0c2c4" stroke-width="1.25" stroke-linejoin="round" stroke-linecap="round"/><path d="M4.2 6 V12 M6.2 6 V12 M8 6 V8" stroke="#6d7073" stroke-width="1" opacity=".5"/><rect x="9.7" y="8.7" width="6.1" height="5.9" rx="1.7" fill="#222d45" stroke="#4b86ea" stroke-width="1.4"/></svg></span><span class="t bold" style="left:100px;letter-spacing:0.334px">yudao-module-member</span></div>
<div class="row" style="top:948px"><span class="arr" style="left:62.5px"><svg width="12" height="12" viewBox="0 0 12 12" ><path d="M4 2.3 L8.1 6 L4 9.7" fill="none" stroke="#b9bbbd" stroke-width="1.3" stroke-linecap="round" stroke-linejoin="round"/></svg></span><span class="ico" style="left:81px;top:2px"><svg width="16" height="16" viewBox="0 0 16 16" ><path d="M8.2 13.7 H2.9 Q1.5 13.7 1.5 12.3 V3.6 Q1.5 2.2 2.9 2.2 H5.6 L7.3 4.4 H13.1 Q14.5 4.4 14.5 5.8 V7.2" fill="none" stroke="#c0c2c4" stroke-width="1.25" stroke-linejoin="round" stroke-linecap="round"/><path d="M4.2 6 V12 M6.2 6 V12 M8 6 V8" stroke="#6d7073" stroke-width="1" opacity=".5"/><rect x="9.7" y="8.7" width="6.1" height="5.9" rx="1.7" fill="#222d45" stroke="#4b86ea" stroke-width="1.4"/></svg></span><span class="t bold" style="left:100px;letter-spacing:0.342px">yudao-module-mp</span></div>
<div class="row" style="top:968px"><span class="arr" style="left:62.5px"><svg width="12" height="12" viewBox="0 0 12 12" ><path d="M4 2.3 L8.1 6 L4 9.7" fill="none" stroke="#b9bbbd" stroke-width="1.3" stroke-linecap="round" stroke-linejoin="round"/></svg></span><span class="ico" style="left:81px;top:2px"><svg width="16" height="16" viewBox="0 0 16 16" ><path d="M8.2 13.7 H2.9 Q1.5 13.7 1.5 12.3 V3.6 Q1.5 2.2 2.9 2.2 H5.6 L7.3 4.4 H13.1 Q14.5 4.4 14.5 5.8 V7.2" fill="none" stroke="#c0c2c4" stroke-width="1.25" stroke-linejoin="round" stroke-linecap="round"/><path d="M4.2 6 V12 M6.2 6 V12 M8 6 V8" stroke="#6d7073" stroke-width="1" opacity=".5"/><rect x="9.7" y="8.7" width="6.1" height="5.9" rx="1.7" fill="#222d45" stroke="#4b86ea" stroke-width="1.4"/></svg></span><span class="t bold" style="left:100px;letter-spacing:0.351px">yudao-module-pay</span></div>
<div class="row" style="top:988px"><span class="arr" style="left:62.5px"><svg width="12" height="12" viewBox="0 0 12 12" ><path d="M4 2.3 L8.1 6 L4 9.7" fill="none" stroke="#b9bbbd" stroke-width="1.3" stroke-linecap="round" stroke-linejoin="round"/></svg></span><span class="ico" style="left:81px;top:2px"><svg width="16" height="16" viewBox="0 0 16 16" ><path d="M8.2 13.7 H2.9 Q1.5 13.7 1.5 12.3 V3.6 Q1.5 2.2 2.9 2.2 H5.6 L7.3 4.4 H13.1 Q14.5 4.4 14.5 5.8 V7.2" fill="none" stroke="#c0c2c4" stroke-width="1.25" stroke-linejoin="round" stroke-linecap="round"/><path d="M4.2 6 V12 M6.2 6 V12 M8 6 V8" stroke="#6d7073" stroke-width="1" opacity=".5"/><rect x="9.7" y="8.7" width="6.1" height="5.9" rx="1.7" fill="#222d45" stroke="#4b86ea" stroke-width="1.4"/></svg></span><span class="t bold" style="left:100px;letter-spacing:0.330px">yudao-module-report</span></div>
</div>
</div>
<div id="tabs">
<div id="tab"><i></i><span class="ico"><svg width="16" height="16" viewBox="0 0 16 16" ><circle cx="8" cy="8" r="6.5" fill="#25324d" stroke="#4f82dc" stroke-width="1.2"/><path d="M10.4 6.3 A3 3 0 1 0 10.4 9.7" fill="none" stroke="#4f82dc" stroke-width="1.3" stroke-linecap="round"/></svg></span><span class="t">BpmTaskServiceImpl.java</span>
<span class="x"><svg width="10" height="10" viewBox="0 0 10 10" ><path d="M1.5 1.5 L8.5 8.5 M8.5 1.5 L1.5 8.5" stroke="#808386" stroke-width="1.1" stroke-linecap="round"/></svg></span></div>
<div style="position:absolute;left:1167px;top:14px;width:3px;height:14px"><svg width="3" height="14" viewBox="0 0 3 14" ><rect x="0" y="0" width="3" height="2" fill="#ced0d6"/><rect x="0" y="5.5" width="3" height="2" fill="#ced0d6"/><rect x="0" y="11" width="3" height="2" fill="#ced0d6"/></svg></div>
</div>
<div id="editor"><div id="ed">
<div id="gsep"></div>
<div id="margin"></div>
<div class="gd" style="left:619px;top:244px;height:747px;background:#3a3a3a"></div>
<div class="gd" style="left:650px;top:332px;height:21px;background:#3a3a3a"></div>
<div class="gd" style="left:650px;top:464px;height:21px;background:#3a3a3a"></div>
<div class="gd" style="left:681px;top:794px;height:21px;background:#3a3a3a"></div>
<div class="mk" style="top:442px;background:#5f5b36"></div>
<div class="mk" style="top:662px;background:#384c5c"></div>
<div class="mk" style="top:772px;background:#384c5c"></div>
<div class="mk" style="top:860px;background:#384c5c"></div>
<div class="hlb" style="left:722.2px;top:222px;width:171.8px"></div>
<div class="hlb" style="left:652.0px;top:970px;width:171.8px"></div>
<div class="fb" style="left:925.0px;top:244px"></div>
<div class="fb" style="left:1120.0px;top:662px"></div>
<div style="position:absolute;left:575.9px;top:250.3px;width:10px;height:10px"><svg width="10" height="10" viewBox="0 0 10 10" ><path d="M3.4 2.2 L6.6 5 L3.4 7.8" fill="none" stroke="#8a8d90" stroke-width="1.2" stroke-linecap="round" stroke-linejoin="round"/></svg></div>
<div style="position:absolute;left:575.9px;top:668.3px;width:10px;height:10px"><svg width="10" height="10" viewBox="0 0 10 10" ><path d="M3.4 2.2 L6.6 5 L3.4 7.8" fill="none" stroke="#8a8d90" stroke-width="1.2" stroke-linecap="round" stroke-linejoin="round"/></svg></div>
<div class="ln" style="top:68px">245</div>
<div class="ln" style="top:90px">246</div>
<div class="ln" style="top:112px">247</div>
<div class="ln" style="top:134px">248</div>
<div class="ln" style="top:156px">249</div>
<div class="ln" style="top:178px">250</div>
<div class="ln" style="top:200px">251</div>
<div class="ln" style="top:222px">252</div>
<div class="ln" style="top:244px">253</div>
<div class="ln" style="top:266px">256</div>
<div class="ln" style="top:288px">257</div>
<div class="ln" style="top:310px">258</div>
<div class="ln" style="top:332px">259</div>
<div class="ln" style="top:354px">260</div>
<div class="ln" style="top:376px">261</div>
<div class="ln" style="top:398px">262</div>
<div class="ln" style="top:420px">263</div>
<div class="ln" style="top:442px">264</div>
<div class="ln" style="top:464px">265</div>
<div class="ln" style="top:486px">266</div>
<div class="ln" style="top:508px">267</div>
<div class="ln" style="top:530px">268</div>
<div class="ln" style="top:552px">269</div>
<div class="ln" style="top:574px">270</div>
<div class="ln" style="top:596px">271</div>
<div class="ln" style="top:618px">272</div>
<div class="ln" style="top:640px">273</div>
<div class="ln" style="top:662px">274</div>
<div class="ln" style="top:706px">281</div>
<div class="ln" style="top:728px">282</div>
<div class="ln" style="top:750px">283</div>
<div class="ln" style="top:772px">284</div>
<div class="ln" style="top:794px">285</div>
<div class="ln" style="top:816px">286</div>
<div class="ln" style="top:838px">287</div>
<div class="ln" style="top:860px">288</div>
<div class="ln" style="top:882px">289</div>
<div class="ln" style="top:904px">290</div>
<div class="ln" style="top:926px">291</div>
<div class="ln" style="top:948px">292</div>
<div class="ln" style="top:970px">293</div>
<div class="ln" style="top:992px">294</div>
<div class="cl" style="top:69.2px"><span class="d">     <span class="as">*</span> 如果父任务是有前后【加签】的任务，如果它【加签】出来的子任务都被处理，需要处理父任务：</span></div>
<div class="cl" style="top:91.2px"><span class="d">     <span class="as">*</span></span></div>
<div class="cl" style="top:113.2px"><span class="d">     <span class="as">*</span> <span class="i">1.</span> 如果是【向前】加签，则需要重新激活父任务，让它可以被审批</span></div>
<div class="cl" style="top:135.2px"><span class="d">     <span class="as">*</span> <span class="i">2.</span> 如果是【向后】加签，则需要完成父任务，让它完成审批</span></div>
<div class="cl" style="top:157.2px"><span class="d">     <span class="as">*</span></span></div>
<div class="cl" style="top:179.2px"><span class="d">     <span class="as">*</span> </span><span class="dt">@param</span><span class="d"> </span><span class="dp">parentTaskId</span><span class="d"> 父任务编号</span></div>
<div class="cl" style="top:201.2px"><span class="d">     <span class="as">*</span><span class="i">/</span></span></div>
<div class="cl" style="top:223.2px">    <span class="k">private void </span><span class="m hl">handleParentTaskIfSign</span>(String parentTaskId) {</div>
<div class="cl" style="top:245.2px">        <span class="k">if </span>(StrUtil.<span class="i">isBlank</span>(parentTaskId)) <span class="fold">{...}</span></div>
<div class="cl" style="top:267.2px">        <span class="c">// 1.1 判断是否还有子任务。如果没有，就不处理</span></div>
<div class="cl" style="top:289.2px">        Long childrenTaskCount = getTaskCountByParentTaskId(parentTaskId)<span class="k">;</span></div>
<div class="cl" style="top:311.2px">        <span class="k">if </span>(childrenTaskCount &gt; <span class="n">0</span>) {</div>
<div class="cl" style="top:333.2px">            <span class="k">return;</span></div>
<div class="cl" style="top:355.2px">        }</div>
<div class="cl" style="top:377.2px">        <span class="c">// 1.2 只处理加签的父任务</span></div>
<div class="cl" style="top:399.2px">        Task parentTask = validateTaskExist(parentTaskId)<span class="k">;</span></div>
<div class="cl" style="top:421.2px">        String scopeType = parentTask.getScopeType()<span class="k">;</span></div>
<div class="cl" style="top:443.2px">        <span class="k">if </span>(BpmTaskSignTypeEnum.<span class="i">of</span>(scopeType) == <span class="k">null</span>) {</div>
<div class="cl" style="top:465.2px">            <span class="k">return;</span></div>
<div class="cl" style="top:487.2px">        }</div>
<div class="cl" style="top:509.2px"></div>
<div class="cl" style="top:531.2px">        <span class="c">// 2. 子任务已处理完成，清空 scopeType 字段，修改 parentTask 信息，方便后续可以继续向前后向后加签</span></div>
<div class="cl" style="top:553.2px">        TaskEntityImpl parentTaskImpl = (TaskEntityImpl) parentTask<span class="k">;</span></div>
<div class="cl" style="top:575.2px">        parentTaskImpl.setScopeType(<span class="k">null</span>)<span class="k">;</span></div>
<div class="cl" style="top:597.2px">        <span class="f">taskService</span>.saveTask(parentTaskImpl)<span class="k">;</span></div>
<div class="cl" style="top:619.2px"></div>
<div class="cl" style="top:641.2px">        <span class="c">// 3.1 情况一：处理向【向前】加签</span></div>
<div class="cl" style="top:663.2px">        <span class="k">if </span>(BpmTaskSignTypeEnum.<span class="f i">BEFORE</span>.getType().equals(scopeType)) <span class="fold">{...}</span><span class="k"> else if </span>(BpmTaskSignTypeEnum.<span class="f i">AFTER</span>.getType().equals(scopeType))</div>
<div class="cl" style="top:685.2px">          {</div>
<div class="cl" style="top:707.2px">            <span class="c">// 只有 parentTask 处于 APPROVING 的情况下，才可以继续 complete 完成</span></div>
<div class="cl" style="top:729.2px">            <span class="c">// 否则，一个未审批的 parentTask 任务，在加签出来的任务都被减签的情况下，就直接完成审批，这样会存在问题</span></div>
<div class="cl" style="top:751.2px">            Integer status = (Integer) parentTask.getTaskLocalVariables().get(BpmConstants.<span class="f i">TASK_VARIABLE_STATUS</span>)<span class="k">;</span></div>
<div class="cl" style="top:773.2px">            <span class="k">if </span>(ObjectUtil.<span class="i">notEqual</span>(status<span class="k">,</span> BpmTaskStatusEnum.<span class="f i">APPROVING</span>.getStatus())) {</div>
<div class="cl" style="top:795.2px">                <span class="k">return;</span></div>
<div class="cl" style="top:817.2px">            }</div>
<div class="cl" style="top:839.2px">            <span class="c">// 3.2.2 完成自己（因为它已经没有子任务，所以也可以完成）</span></div>
<div class="cl" style="top:861.2px">            updateTaskStatus(parentTaskId<span class="k">,</span> BpmTaskStatusEnum.<span class="f i">APPROVE</span>.getStatus())<span class="k">;</span></div>
<div class="cl" style="top:883.2px">            <span class="f">taskService</span>.complete(parentTaskId)<span class="k">;</span></div>
<div class="cl" style="top:905.2px">        }</div>
<div class="cl" style="top:927.2px"></div>
<div class="cl" style="top:949.2px">        <span class="c">// 4. 递归处理父任务</span></div>
<div class="cl" style="top:971.2px">        <span class="hl">handleParentTaskIfSign</span>(parentTask.getParentTaskId())<span class="k">;</span></div>
<div class="cl" style="top:993.2px">    }</div>
<div id="pink"></div>
<svg width="20" height="20" viewBox="555 970 20 20" style="position:absolute;left:555px;top:970px"><path d="M562 975.1 A5.6 5.6 0 1 0 570 977.3" fill="none" stroke="#c3c5c7" stroke-width="1.3" stroke-linecap="round"/><path d="M567.2 973.5 H572.2 L567.2 978.6 Z" fill="#c3c5c7"/><circle cx="565" cy="979.9" r="2.1" fill="#5b9e58"/></svg>
<div id="insp">
<div style="position:absolute;left:6.5px;top:4px"><svg width="13" height="12" viewBox="0 0 13 12" ><path d="M6.5 1 L11.9 10.3 H1.1 Z" fill="#d9a21b" stroke="#d9a21b" stroke-width="1.6" stroke-linejoin="round"/><path d="M6.5 4 V7.6" stroke="#3a2f10" stroke-width="1.5" stroke-linecap="round"/><circle cx="6.5" cy="9.6" r=".9" fill="#3a2f10"/></svg></div><span style="left:22px">1</span>
<div style="position:absolute;left:34.5px;top:4px"><svg width="13" height="12" viewBox="0 0 13 12" ><path d="M6.5 1 L11.9 10.3 H1.1 Z" fill="#8a7f55" stroke="#8a7f55" stroke-width="1.6" stroke-linejoin="round"/><path d="M6.5 4 V7.6" stroke="#2f2c20" stroke-width="1.5" stroke-linecap="round"/><circle cx="6.5" cy="9.6" r=".9" fill="#2f2c20"/></svg></div><span style="left:50px">3</span>
<div style="position:absolute;left:67px;top:7px"><svg width="10" height="10" viewBox="0 0 10 10" ><path d="M1 6.2 L5 2.2 L9 6.2" fill="none" stroke="#c3c5c7" stroke-width="1.3" stroke-linecap="round" stroke-linejoin="round"/></svg></div>
</div>
</div></div>
<div style="position:absolute;left:496px;top:68px;width:1px;height:936px;background:#353739"></div>
<div id="bottom"></div>
</body></html>
